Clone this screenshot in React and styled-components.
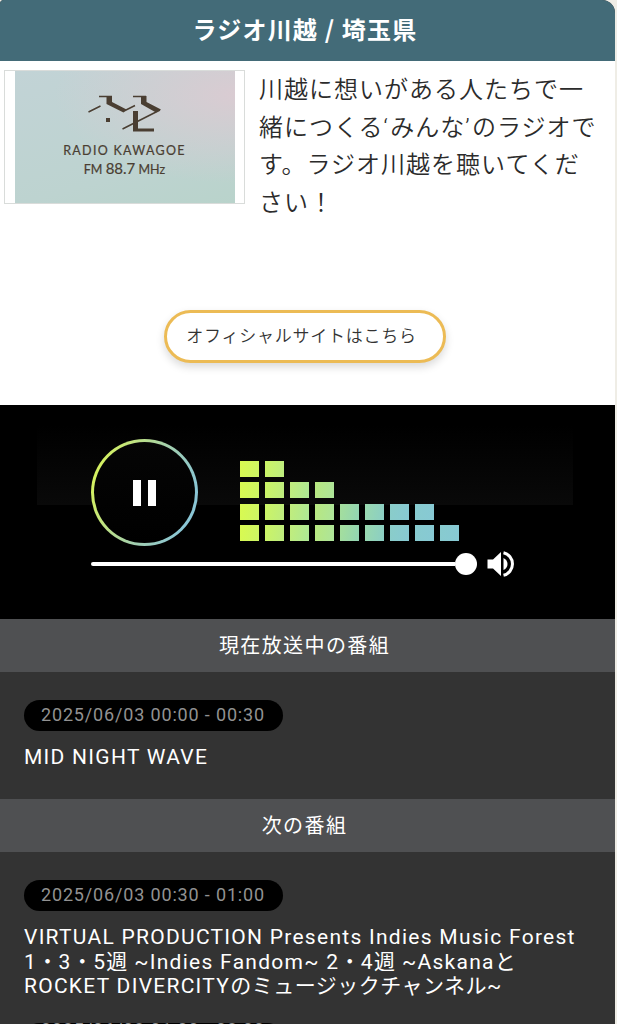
import React from 'react';
import styled, { createGlobalStyle } from 'styled-components';

const GlobalStyle = createGlobalStyle`
  * {
    box-sizing: border-box;
  }

  body {
    margin: 0;
    background: #efede6;
    overflow: hidden;
  }
`;

const Page = styled.div`
  width: 615px;
  height: 1024px;
  overflow: hidden;
  font-family: Roboto, 'Noto Sans CJK JP', sans-serif;
  background: #333;
  border-radius: 4px 13px 0 0;
`;

const Header = styled.header`
  display: flex;
  align-items: center;
  justify-content: center;
  height: 61px;
  padding: 0 5px 5px 0;
  background: #436b78;
  color: #fff;
`;

const Title = styled.h1`
  margin: 0;
  font-family: 'Noto Sans CJK JP', sans-serif;
  font-size: 24px;
  font-weight: 700;
  letter-spacing: 1.2px;
  white-space: nowrap;
`;

const Intro = styled.section`
  display: flex;
  flex-direction: column;
  align-items: flex-start;
  height: 344px;
  padding: 9px 0 0 4px;
  background: #fff;
`;

const IntroRow = styled.div`
  display: flex;
  height: 240px;
`;

const LogoFrame = styled.div`
  display: flex;
  justify-content: center;
  width: 241px;
  height: 134px;
  border: 1px solid #d9dcda;
`;

const LogoCard = styled.div`
  display: flex;
  flex-direction: column;
  align-items: center;
  width: 220px;
  height: 132px;
  padding-top: 24px;
  color: #4a3e32;
  font-family: Lato, sans-serif;
  background:
    radial-gradient(ellipse at 100% 18%, rgba(219, 203, 210, 0.95), rgba(208, 207, 212, 0) 58%),
    linear-gradient(165deg, #c2d3d6, #bdd3d0 70%, #b9d3cb);
`;

const LogoName = styled.div`
  margin-top: 10px;
  font-size: 12.5px;
  line-height: 18px;
  letter-spacing: 1.3px;
  white-space: nowrap;
  -webkit-text-stroke: 0.2px #4a3e32;
`;

const LogoFreq = styled.div`
  font-size: 12.5px;
  line-height: 16px;
  white-space: nowrap;
  -webkit-text-stroke: 0.2px #4a3e32;

  span {
    font-size: 15px;
  }
`;

const Description = styled.p`
  width: 345px;
  margin: -1px 0 0 14px;
  color: #2b2b2b;
  font-family: 'Noto Sans CJK JP', sans-serif;
  font-size: 24px;
  font-weight: 350;
  line-height: 37.6px;
  letter-spacing: 1px;
  white-space: nowrap;
`;

const Quote = styled.span`
  font-family: Roboto, sans-serif;
  line-height: 1;
  letter-spacing: 2.5px;
`;

const SiteButton = styled.button`
  width: 282px;
  height: 53px;
  margin-left: 160px;
  padding: 0 7px 4px 0;
  border: 3px solid #ecbb55;
  border-radius: 27px;
  background: #fff;
  box-shadow: 0 4px 9px rgba(0, 0, 0, 0.15);
  color: #333;
  font-family: 'Noto Sans CJK JP', sans-serif;
  font-size: 17px;
  font-weight: 350;
  letter-spacing: 0.75px;
  white-space: nowrap;
`;

const Player = styled.section`
  height: 214px;
  padding: 34px 0 0 91px;
  background:
    linear-gradient(#000, #090909) 37px 20px / 536px 80px no-repeat,
    #000;
`;

const Controls = styled.div`
  display: flex;
  height: 107px;
`;

const PlayButton = styled.button`
  display: flex;
  align-items: center;
  justify-content: center;
  gap: 7px;
  width: 107px;
  height: 107px;
  padding: 0;
  border: 3px solid transparent;
  border-radius: 50%;
  background:
    linear-gradient(#050505, #000) padding-box,
    linear-gradient(110deg, #d9f45a 8%, #a3cfae 55%, #8ac6d5 85%) border-box;
`;

const PauseBar = styled.span`
  width: 8px;
  height: 26px;
  background: #fff;
`;

const Equalizer = styled.div`
  display: flex;
  align-items: flex-end;
  gap: 6px;
  margin: 0 0 5px 42px;
`;

const Column = styled.div`
  display: flex;
  flex-direction: column;
  gap: 5.5px;
`;

const Cell = styled.span`
  width: 19px;
  height: 16px;
  background: linear-gradient(100deg, ${(props) => props.$from}, ${(props) => props.$to});
`;

const VolumeRow = styled.div`
  display: flex;
  align-items: center;
  height: 36px;
`;

const Track = styled.div`
  width: 364px;
  height: 4px;
  border-radius: 2px 0 0 2px;
  background: #fff;
`;

const Thumb = styled.div`
  width: 22px;
  height: 22px;
  margin-right: 10px;
  border-radius: 50%;
  background: #fff;
`;

const SectionTitle = styled.h2`
  display: flex;
  align-items: center;
  justify-content: center;
  height: 53px;
  margin: 0;
  padding: 0 6px 2px 0;
  background: #4f5052;
  color: #fff;
  font-family: 'Noto Sans CJK JP', sans-serif;
  font-size: 20px;
  font-weight: 400;
  letter-spacing: 1.4px;
`;

const Program = styled.div`
  display: flex;
  flex-direction: column;
  align-items: flex-start;
  height: ${(props) => props.$height}px;
  padding: 28px 0 0 24px;
`;

const Time = styled.div`
  width: 259px;
  height: 31px;
  flex-shrink: 0;
  padding-left: 17px;
  border-radius: 16px;
  background: #000;
  color: #929292;
  font-size: 18px;
  line-height: ${(props) => (props.$tight ? 13 : 30)}px;
  letter-spacing: 0.84px;
  white-space: nowrap;
`;

const ProgramTitle = styled.div`
  margin-top: 14px;
  color: #fff;
  font-size: 21px;
  line-height: 24.5px;
  letter-spacing: 1.27px;
  white-space: nowrap;
`;

const Kana = styled.span`
  letter-spacing: 0.5px;
`;

const columns = [
  { count: 4, from: '#d9fa50', to: '#cdf565' },
  { count: 4, from: '#ccf564', to: '#bdec80' },
  { count: 3, from: '#c1ed7c', to: '#ade896' },
  { count: 3, from: '#b8e87f', to: '#ade49b' },
  { count: 2, from: '#a5df9c', to: '#92d4b4' },
  { count: 2, from: '#99d9ae', to: '#8bcec5' },
  { count: 2, from: '#8acdc9', to: '#87c9d3' },
  { count: 2, from: '#88cbcf', to: '#87c9d4' },
  { count: 1, from: '#88cbcf', to: '#87c9d4' },
];

const KawagoeMark = () => (
  <svg width="74" height="37" viewBox="0 0 74 37" fill="none" stroke="#4a3e32">
    <path d="M11 1.5H24M45 1.5H58" strokeWidth="1.4" />
    <path d="M18.5 1H24V7L38.5 14.5L35.5 17.5L18.5 9Z" fill="#4a3e32" stroke="none" />
    <path d="M53 1H58.5V7L73 14.5L68 17.5L53 9Z" fill="#4a3e32" stroke="none" />
    <path d="M0.5 17L12.5 11M36 16L47 10.5M34.5 34L72 15" strokeWidth="1.5" />
    <path d="M18 23H22V27H18ZM45 16H50V33.5H66V36.5H45Z" fill="#4a3e32" stroke="none" />
  </svg>
);

const VolumeIcon = () => (
  <svg width="28" height="28" viewBox="0 0 28 28" fill="#fff">
    <path d="M0.5 9.5H6L14 2V26L6 18.5H0.5Z" />
    <path d="M16.5 8Q20.5 10 20.5 14T16.5 20Z" />
    <path d="M16.5 2.7A11.6 11.6 0 0 1 16.5 25.3" fill="none" stroke="#fff" strokeWidth="3" />
  </svg>
);

const App = () => {
  return (
    <>
      <GlobalStyle />
      <Page lang="ja">
        <Header>
          <Title>ラジオ川越 / 埼玉県</Title>
        </Header>
        <Intro>
          <IntroRow>
            <LogoFrame>
              <LogoCard>
                <KawagoeMark />
                <LogoName>RADIO KAWAGOE</LogoName>
                <LogoFreq>
                  FM <span>88.7</span> MHz
                </LogoFreq>
              </LogoCard>
            </LogoFrame>
            <Description>
              川越に想いがある人たちで一
              <br />
              緒につくる<Quote>‘</Quote>みんな<Quote>’</Quote>のラジオで
              <br />
              す。ラジオ川越を聴いてくだ
              <br />
              さい！
            </Description>
          </IntroRow>
          <SiteButton>オフィシャルサイトはこちら</SiteButton>
        </Intro>
        <Player>
          <Controls>
            <PlayButton aria-label="Pause">
              <PauseBar />
              <PauseBar />
            </PlayButton>
            <Equalizer>
              {columns.map((column, i) => (
                <Column key={i}>
                  {Array.from({ length: column.count }, (_, j) => (
                    <Cell key={j} $from={column.from} $to={column.to} />
                  ))}
                </Column>
              ))}
            </Equalizer>
          </Controls>
          <VolumeRow>
            <Track />
            <Thumb />
            <VolumeIcon />
          </VolumeRow>
        </Player>
        <SectionTitle>現在放送中の番組</SectionTitle>
        <Program $height={127}>
          <Time>2025/06/03 00:00 - 00:30</Time>
          <ProgramTitle>MID NIGHT WAVE</ProgramTitle>
        </Program>
        <SectionTitle>次の番組</SectionTitle>
        <Program $height={143}>
          <Time>2025/06/03 00:30 - 01:00</Time>
          <ProgramTitle>
            VIRTUAL PRODUCTION Presents Indies Music Forest
            <br />
            1<Kana>・</Kana>3<Kana>・</Kana>5<Kana>週</Kana> ~Indies Fandom~ 2<Kana>・</Kana>4
            <Kana>週</Kana> ~Askana<Kana>と</Kana>
            <br />
            ROCKET DIVERCITY<Kana>のミュージックチャンネル</Kana>~
          </ProgramTitle>
        </Program>
        <Program $height={142}>
          <Time $tight>2025/06/03 01:00 - 02:00</Time>
        </Program>
      </Page>
    </>
  );
};

export default App;
